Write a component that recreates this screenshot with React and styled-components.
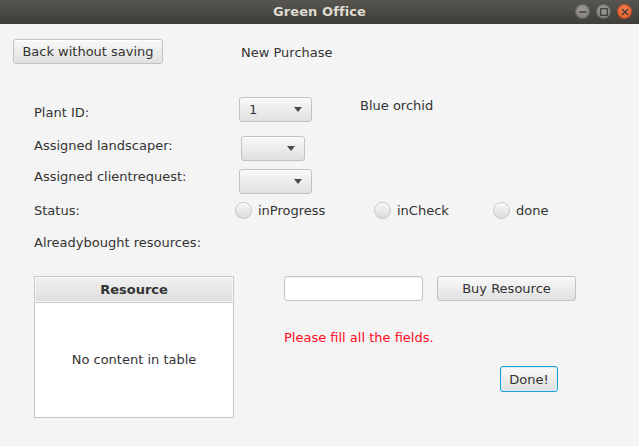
import React from 'react';
import styled, { createGlobalStyle } from 'styled-components';

const GlobalStyle = createGlobalStyle`
  html, body {
    margin: 0;
    padding: 0;
    background: #f4f4f4;
  }
  * { box-sizing: border-box; }
`

export default function App() {
  return (
    <>
      <GlobalStyle />
      <Window>
        <TitleBar>
          <Title>Green Office</Title>
          <WinControls>
            <WinBtn><svg width="8" height="8" viewBox="0 0 8 8"><path d="M0.5 4h7" stroke="#3c3b37" strokeWidth="1.4" /></svg></WinBtn>
            <WinBtn><svg width="8" height="8" viewBox="0 0 8 8"><rect x="0.7" y="0.7" width="6.6" height="6.6" fill="none" stroke="#3c3b37" strokeWidth="1.2" /></svg></WinBtn>
            <WinBtn close><svg width="8" height="8" viewBox="0 0 8 8"><path d="M1 1l6 6M7 1l-6 6" stroke="#3c3b37" strokeWidth="1.4" /></svg></WinBtn>
          </WinControls>
        </TitleBar>

        <Content>
          <TopRow>
            <Button width={150}>Back without saving</Button>
            <Heading>New Purchase</Heading>
          </TopRow>

          <Form>
            <Row height={38}>
              <Label top={8}>Plant ID:</Label>
              <Combo width={73}><ComboText>1</ComboText><Arrow /></Combo>
              <Info>Blue orchid</Info>
            </Row>
            <Row height={34}>
              <Label top={3}>Assigned landscaper:</Label>
              <Combo width={64} top={1} left={2}><ComboText /><Arrow /></Combo>
            </Row>
            <Row height={33}>
              <Label top={0}>Assigned clientrequest:</Label>
              <Combo width={73}><ComboText /><Arrow /></Combo>
            </Row>
            <Row height={33}>
              <Label top={1}>Status:</Label>
              <RadioGroup>
                <RadioOption width={139}><Radio />inProgress</RadioOption>
                <RadioOption width={119}><Radio />inCheck</RadioOption>
                <RadioOption><Radio />done</RadioOption>
              </RadioGroup>
            </Row>
            <Row height={41}>
              <Label top={0}>Alreadybought resources:</Label>
            </Row>
          </Form>

          <Bottom>
            <Table>
              <TableHead>Resource</TableHead>
              <TableBody>No content in table</TableBody>
            </Table>
            <Side>
              <BuyRow>
                <TextField />
                <Button width={139}>Buy Resource</Button>
              </BuyRow>
              <ErrorText>Please fill all the fields.</ErrorText>
              <DoneButton>Done!</DoneButton>
            </Side>
          </Bottom>
        </Content>
      </Window>
    </>
  )
}

const Window = styled.div`
  width: 639px;
  height: 446px;
  background: #f4f4f4;
  font-family: 'DejaVu Sans', 'Noto Sans', sans-serif;
  font-size: 13px;
  color: #333333;
  overflow: hidden;
`

const TitleBar = styled.div`
  position: relative;
  height: 24px;
  background: linear-gradient(#57554f, #3e3d39);
  display: flex;
  align-items: center;
  justify-content: center;
`

const Title = styled.div`
  color: #dfdbd2;
  font-weight: bold;
  font-size: 13px;
  letter-spacing: 0.1px;
  margin-top: -1px;
`

const WinControls = styled.div`
  position: absolute;
  right: 7px;
  top: 4px;
  display: flex;
  gap: 6px;
`

const WinBtn = styled.div`
  width: 15px;
  height: 15px;
  border-radius: 50%;
  display: flex;
  align-items: center;
  justify-content: center;
  background: ${p => p.close
    ? 'radial-gradient(circle at 50% 35%, #f7804f, #e2531d)'
    : 'radial-gradient(circle at 50% 35%, #9a9891, #7b7973)'};
  box-shadow: inset 0 0 0 1px rgba(0,0,0,0.25);
`

const Content = styled.div`
  padding-top: 15px;
`

const TopRow = styled.div`
  display: flex;
  align-items: center;
  padding-left: 13px;
  height: 25px;
`

const Button = styled.button`
  width: ${p => p.width}px;
  height: 25px;
  padding: 0;
  font-family: inherit;
  font-size: 13px;
  color: #333333;
  border: 1px solid #c2c2c2;
  border-radius: 3px;
  background: linear-gradient(#f9f9f9, #e0e0e0);
  box-shadow: inset 0 1px 0 #ffffff;
`

const Heading = styled.div`
  margin-left: 78px;
  margin-top: 2px;
`

const Form = styled.div`
  margin-top: 33px;
  padding-left: 34px;
`

const Row = styled.div`
  display: flex;
  align-items: flex-start;
  height: ${p => p.height}px;
`

const Label = styled.div`
  width: 205px;
  line-height: 16px;
  margin-top: ${p => p.top}px;
`

const Combo = styled.div`
  width: ${p => p.width}px;
  height: 25px;
  margin-top: ${p => p.top || 0}px;
  margin-left: ${p => p.left || 0}px;
  display: flex;
  align-items: center;
  justify-content: space-between;
  padding: 0 9px 0 9px;
  border: 1px solid #c2c2c2;
  border-radius: 3px;
  background: linear-gradient(#f9f9f9, #e0e0e0);
  box-shadow: inset 0 1px 0 #ffffff;
`

const ComboText = styled.span`
  line-height: 16px;
`

const Arrow = styled.span`
  width: 0;
  height: 0;
  border-left: 4px solid transparent;
  border-right: 4px solid transparent;
  border-top: 5px solid #4a4a4a;
`

const Info = styled.div`
  margin-left: 48px;
  margin-top: 1px;
  line-height: 16px;
`

const RadioGroup = styled.div`
  display: flex;
  margin-left: -4px;
`

const RadioOption = styled.div`
  width: ${p => p.width ? `${p.width}px` : 'auto'};
  display: flex;
  align-items: center;
  gap: 6px;
  line-height: 16px;
`

const Radio = styled.span`
  width: 17px;
  height: 17px;
  border-radius: 50%;
  border: 1px solid #c4c4c4;
  background: linear-gradient(#f7f7f7, #dcdcdc);
  box-shadow: inset 0 1px 0 #ffffff;
`

const Bottom = styled.div`
  display: flex;
  padding-left: 34px;
`

const Table = styled.div`
  width: 200px;
  height: 142px;
  border: 1px solid #c8c8c8;
  display: flex;
  flex-direction: column;
  background: #ffffff;
`

const TableHead = styled.div`
  height: 26px;
  display: flex;
  align-items: center;
  justify-content: center;
  font-weight: bold;
  background: linear-gradient(#f1f1f1, #dedede);
  border-bottom: 1px solid #c8c8c8;
  box-shadow: inset 0 0 0 1px #f8f8f8;
`

const TableBody = styled.div`
  flex: 1;
  display: flex;
  align-items: center;
  justify-content: center;
  padding-bottom: 1px;
`

const Side = styled.div`
  margin-left: 50px;
  display: flex;
  flex-direction: column;
  align-items: flex-start;
`

const BuyRow = styled.div`
  display: flex;
  gap: 14px;
`

const TextField = styled.input`
  width: 139px;
  height: 25px;
  border: 1px solid #c4c4c4;
  border-radius: 3px;
  background: #ffffff;
  box-shadow: inset 0 1px 2px rgba(0,0,0,0.06);
  outline: none;
`

const ErrorText = styled.div`
  color: #ff0a1e;
  margin-top: 29px;
  line-height: 16px;
`

const DoneButton = styled.button`
  margin-top: 20px;
  margin-left: 216px;
  width: 58px;
  height: 26px;
  padding: 0;
  font-family: inherit;
  font-size: 13px;
  color: #333333;
  border: 1px solid #1c9fd6;
  border-radius: 3px;
  background: linear-gradient(#f9f9f9, #e0e0e0);
  box-shadow: inset 0 0 0 1px #d9eef8;
`
